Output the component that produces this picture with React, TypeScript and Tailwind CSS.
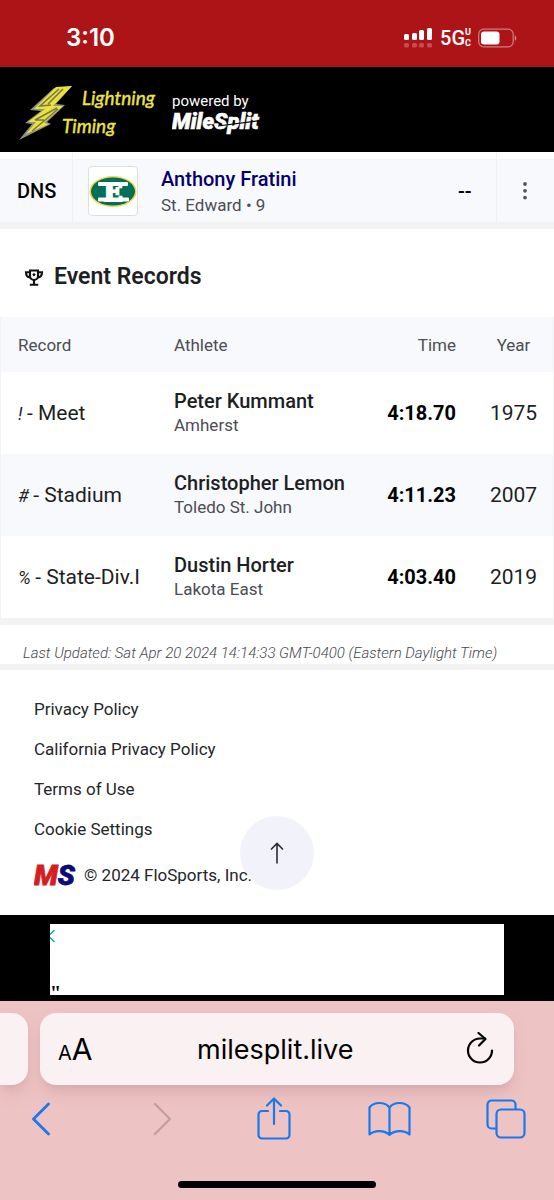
type RecordRow = {
  mark: string;
  label: string;
  athlete: string;
  school: string;
  time: string;
  year: string;
};

const records: RecordRow[] = [
  { mark: "!", label: "- Meet", athlete: "Peter Kummant", school: "Amherst", time: "4:18.70", year: "1975" },
  { mark: "#", label: "- Stadium", athlete: "Christopher Lemon", school: "Toledo St. John", time: "4:11.23", year: "2007" },
  { mark: "%", label: "- State-Div.I", athlete: "Dustin Horter", school: "Lakota East", time: "4:03.40", year: "2019" },
];

const footerLinks = ["Privacy Policy", "California Privacy Policy", "Terms of Use", "Cookie Settings"];

function StatusBar() {
  return (
    <div className="flex items-center justify-between bg-[#ad1417] pl-[66px] pr-[37px] pt-2 h-[67px] text-white font-['Inter',sans-serif]">
      <span className="text-2xl font-semibold">3:10</span>
      <div className="flex items-center gap-[7px]">
        {/* Dual SIM signal */}
        <svg width="29" height="20" viewBox="0 0 29 20" fill="currentColor">
          <rect x="0" y="6" width="5" height="6" rx="1.5" />
          <rect x="8" y="5" width="5" height="7" rx="1.5" />
          <rect x="15" y="2" width="5" height="10" rx="1.5" />
          <rect x="23" y="0" width="5" height="12" rx="1.5" />
          <g opacity="0.25">
            <rect x="0" y="15" width="5" height="4.5" rx="1.5" />
            <rect x="8" y="15" width="5" height="4.5" rx="1.5" />
            <rect x="15" y="15" width="5" height="4.5" rx="1.5" />
            <rect x="23" y="15" width="5" height="4.5" rx="1.5" />
          </g>
        </svg>
        <div className="flex items-center font-['Roboto',sans-serif]">
          <span className="text-xl leading-5 font-medium">5G</span>
          <span className="flex flex-col text-[9px] leading-[11px] font-bold">
            <span>U</span>
            <span>C</span>
          </span>
        </div>
        <svg width="39" height="20" viewBox="0 0 39 20">
          <rect x="0.7" y="1.2" width="34.5" height="17.6" rx="5" fill="none" stroke="#fff" strokeOpacity="0.45" strokeWidth="1.2" />
          <rect x="3" y="3.5" width="18.5" height="13" rx="3" fill="#fff" />
          <path d="M36.8 7.2c2 .9 2 4.700 0 5.600z" fill="#fff" fillOpacity="0.5" />
        </svg>
      </div>
    </div>
  );
}

function Header() {
  return (
    <header className="flex items-center gap-2 bg-black h-[85px] pl-[18px] text-white">
      <svg width="146" height="60" viewBox="0 0 146 60" role="img" aria-label="Lightning Timing">
        <path d="M36 8 54 6 38 24 47 25 29 42 33 44 1 60 14 44 7 43 23 31 12 30Z" fill="#8f9087" />
        <path d="M38 7 54 6 35 26 45 26 26 43 31 44 8 54 18 42 10 42 27 29 16 29Z" fill="#e9e23a" />
        <path d="M41 9 22 26 33 25M45 9 30 24M39 28 17 40 26 40M40 29 26 41 14 51" fill="none" stroke="#77794f" strokeWidth="1.6" />
        <g fill="#eee545" stroke="#eee545" strokeWidth="0.4" fontFamily="Lato, sans-serif" fontStyle="italic" fontSize="19">
          <text x="64" y="25">Lightning</text>
          <text x="44" y="53">Timing</text>
        </g>
      </svg>
      <div className="flex flex-col pt-2 font-['Roboto',sans-serif]">
        <span className="text-[15px] leading-4">powered by</span>
        <svg width="94" height="26" viewBox="0 0 94 26" role="img" aria-label="MileSplit">
          <text x="0" y="20" fill="#fff" stroke="#fff" strokeWidth="0.6" fontFamily="Roboto, sans-serif" fontStyle="italic" fontWeight="900" fontSize="22">
            MileSplit
          </text>
          <path d="M46 17 92 11" stroke="#000" strokeWidth="1.2" />
        </svg>
      </div>
    </header>
  );
}

function SchoolLogo() {
  return (
    <svg width="48" height="48" viewBox="0 0 48 48" role="img" aria-label="St. Edward">
      <ellipse cx="24" cy="24.500" rx="23.500" ry="15.500" fill="#f3d648" />
      <ellipse cx="24" cy="24.500" rx="22" ry="14" fill="#00705a" />
      <text x="24" y="33.500" textAnchor="middle" fill="#fff" stroke="#fff" strokeWidth="2" fontFamily="DejaVu Serif, serif" fontWeight="700" fontSize="25">
        E
      </text>
      <rect x="9" y="15" width="30" height="4" rx="1" fill="#fff" />
      <rect x="9" y="30.500" width="31" height="4" rx="1" fill="#fff" />
    </svg>
  );
}

function ResultsTable() {
  return (
    <table className="w-full border-b-[7px] border-[#f3f3f4]">
      <tbody>
        {/* Tail of the row above, cut by the header */}
        <tr className="h-[7px] border-b border-[#f3f3f6]">
          <td className="border-r border-[#f3f3f6]" />
          <td />
          <td />
          <td />
          <td className="border-l border-[#f3f3f6]" />
        </tr>
        <tr className="bg-[#f8f9fd]">
          <td className="w-[72px] border-r border-[#f0f1f5] pl-[17px] text-xl font-medium text-black">DNS</td>
          <td className="w-[77px] py-[6px] pl-[15px]">
            <div className="flex items-center justify-center size-[50px] rounded border border-[#dedfe3] bg-white">
              <SchoolLogo />
            </div>
          </td>
          <td className="pl-3 pt-1">
            <a href="#athlete" className="block text-xl leading-6 font-medium text-[#05006e]">
              Anthony Fratini
            </a>
            <span className="block text-[17px] leading-7 text-[#4b4d54]">St. Edward • 9</span>
          </td>
          <td className="pr-6 text-right text-xl font-medium">--</td>
          <td className="w-[58px] border-l border-[#f0f1f5]">
            <button aria-label="More" className="flex items-center justify-center w-full h-10">
              <svg width="6" height="20" viewBox="0 0 6 20" fill="#55565c">
                <circle cx="3" cy="3" r="1.900" />
                <circle cx="3" cy="9.800" r="1.900" />
                <circle cx="3" cy="16.600" r="1.900" />
              </svg>
            </button>
          </td>
        </tr>
      </tbody>
    </table>
  );
}

function EventRecords() {
  return (
    <section>
      <h2 className="flex items-center gap-[10px] h-[88px] pt-[10px] pl-6 text-[23px] font-semibold text-[#1d1f24]">
        <svg width="20" height="20" viewBox="0 0 20 20" fill="none" stroke="#111" strokeWidth="2.100">
          <path d="M6 2.500h8v5.500a4 4 0 0 1-8 0z" />
          <path d="M6 4.200H2c0 3.400 1.400 5 4.200 5.200M14 4.200h4c0 3.400-1.400 5-4.200 5.200M10 12v4M5.800 16.800h8.400" />
          <path d="m10 4.400.6 1.300 1.400.2-1 1 .2 1.400-1.200-.6-1.200.6.2-1.400-1-1 1.400-.2z" fill="#111" stroke="none" />
        </svg>
        Event Records
      </h2>
      <div className="border-x border-[#f3f3f4] border-b-[7px]">
        <table className="w-full">
          <thead>
            <tr className="h-[55px] bg-[#f8f9fd] text-[17px] text-[#4b4d54]">
              <th className="w-[156px] pt-1 pl-[17px] text-left font-normal">Record</th>
              <th className="pt-1 pl-[17px] text-left font-normal">Athlete</th>
              <th className="pt-1 pr-[18px] text-right font-normal">Time</th>
              <th className="w-[79px] pt-1 text-center font-normal">Year</th>
            </tr>
          </thead>
          <tbody>
            {records.map((r) => (
              <tr key={r.mark} className="h-[82px] even:bg-[#f8f9fd] text-xl text-[#1d1f24]">
                <td className="pt-[3px] pl-[17px] text-[21px] whitespace-nowrap">
                  <i className="text-lg">{r.mark} </i>
                  {r.label}
                </td>
                <td className="pl-[17px]">
                  <div className="leading-6 font-medium">{r.athlete}</div>
                  <div className="text-[17px] leading-6 text-[#4b4d54]">{r.school}</div>
                </td>
                <td className="pr-[18px] text-right font-bold text-black">{r.time}</td>
                <td className="pt-[3px] text-center text-[21px]">{r.year}</td>
              </tr>
            ))}
          </tbody>
        </table>
      </div>
      <p className="pt-[17px] pl-[23px] text-[15px] leading-[22px] font-light italic text-[#45474e] border-b-[6px] border-[#f3f3f4]">
        Last Updated: Sat Apr 20 2024 14:14:33 GMT-0400 (Eastern Daylight Time)
      </p>
    </section>
  );
}

function Footer() {
  return (
    <footer className="relative px-[34px] pt-[19px] pb-[22px] text-[17px] text-[#24262b]">
      <ul>
        {footerLinks.map((link) => (
          <li key={link} className="h-10 leading-10">
            <a href="#footer">{link}</a>
          </li>
        ))}
      </ul>
      <div className="relative z-10 flex items-center gap-2 pt-[10px] pointer-events-none">
        <svg width="42" height="34" viewBox="0 0 42 34" role="img" aria-label="MS">
          <text x="0" y="26" strokeWidth="0.8" fontFamily="Roboto, sans-serif" fontStyle="italic" fontWeight="900" fontSize="28">
            <tspan fill="#d3201f" stroke="#d3201f">M</tspan>
            <tspan fill="#0a0a78" stroke="#0a0a78">S</tspan>
          </text>
        </svg>
        <span>© 2024 FloSports, Inc.</span>
      </div>
      <button
        aria-label="Back to top"
        className="absolute left-1/2 bottom-[25px] -translate-x-1/2 flex items-center justify-center size-[74px] rounded-full bg-[#f2f3fa]"
      >
        <svg width="14" height="22" viewBox="0 0 14 22" fill="none" stroke="#2b2c31" strokeWidth="1.600">
          <path d="M7 21.500V1.500M1 7.500l6-6 6 6" />
        </svg>
      </button>
    </footer>
  );
}

function AdBanner() {
  return (
    <div className="bg-black px-[50px] pt-[9px] pb-[6px]">
      <div className="flex flex-col justify-between h-[71px] bg-white">
        <svg width="5" height="14" viewBox="0 0 5 14" className="mt-[5px]" fill="none" stroke="#159fc0" strokeWidth="1.500">
          <path d="M4.500 1 0 5.500M0 8.500 4.500 13" />
        </svg>
        <span className="h-3 leading-5 text-xl font-bold text-black font-['Liberation_Serif',serif]">"</span>
      </div>
    </div>
  );
}

function BrowserBar() {
  return (
    <div className="bg-[#eec3c4] pt-3 pb-3 font-['Inter',sans-serif]">
      <div className="flex gap-3">
        <div className="w-7 rounded-r-2xl bg-[#faf1f2] shadow-lg shadow-[#c99a9c]/50" />
        <div className="flex flex-1 items-center justify-between h-[72px] mr-10 pl-[18px] pr-5 rounded-2xl bg-[#faf1f2] text-black shadow-lg shadow-[#c99a9c]/50">
          <button aria-label="Page settings" className="flex items-baseline">
            <span className="text-xl">A</span>
            <span className="text-3xl">A</span>
          </button>
          <span className="pt-1 pr-2 text-[27px]">milesplit.live</span>
          <button aria-label="Reload">
            <svg width="28" height="34" viewBox="0 0 28 34" fill="none" stroke="#000" strokeWidth="2.200" strokeLinecap="round" strokeLinejoin="round">
              <path d="M26 18.500a12 12 0 1 1-12-12h5" />
              <path d="M12.500 1 19.500 7 13 13.500" />
            </svg>
          </button>
        </div>
      </div>
      <nav className="flex items-center justify-between h-[68px] pl-[21px] pr-7 text-[#1679ee]">
        <button aria-label="Back" className="flex justify-center w-10">
          <svg width="18" height="34" viewBox="0 0 18 34" fill="none" stroke="currentColor" strokeWidth="2.800" strokeLinecap="round" strokeLinejoin="round">
            <path d="M16.500 2 1.500 17l15 15" />
          </svg>
        </button>
        <button aria-label="Forward" className="flex justify-end w-10 text-[#c29fa2]">
          <svg width="28" height="34" viewBox="0 0 28 34" fill="none" stroke="currentColor" strokeWidth="2.400" strokeLinecap="round" strokeLinejoin="round">
            <path d="M6 2l15 15L6 32" />
          </svg>
        </button>
        <button aria-label="Share" className="flex justify-center w-10">
          <svg width="34" height="44" viewBox="0 0 34 44" fill="none" stroke="currentColor" strokeWidth="2.200" strokeLinecap="round" strokeLinejoin="round">
            <path d="M11 14H5a3.500 3.500 0 0 0-3.500 3.500V38A3.500 3.500 0 0 0 5 41.500h24a3.500 3.500 0 0 0 3.500-3.500V17.500A3.500 3.500 0 0 0 29 14h-6" />
            <path d="M17 27V2M10 8.500 17 1.500l7 7" />
          </svg>
        </button>
        <button aria-label="Bookmarks" className="flex justify-center w-10">
          <svg width="43" height="36" viewBox="0 0 43 36" className="shrink-0" fill="none" stroke="currentColor" strokeWidth="2.200" strokeLinecap="round" strokeLinejoin="round">
            <path d="M21.500 6.500C17 .5 6 .5 1.500 6.500v27c5-4.500 15-4.500 20 .5 5-5 15-5 20-.5v-27C37 .5 26 .5 21.500 6.500zV34" />
          </svg>
        </button>
        <button aria-label="Tabs" className="flex justify-center w-10">
          <svg width="40" height="40" viewBox="0 0 40 40" fill="none" stroke="currentColor" strokeWidth="2.200" strokeLinecap="round" strokeLinejoin="round">
            <rect x="10.500" y="10.500" width="28" height="28" rx="4.500" />
            <path d="M29.500 10V5.500a4 4 0 0 0-4-4h-20a4 4 0 0 0-4 4v20a4 4 0 0 0 4 4h4.500" />
          </svg>
        </button>
      </nav>
      <div className="mt-7 mx-auto w-[198px] h-[7px] rounded-full bg-black" />
    </div>
  );
}

export default function App() {
  return (
    <div className="bg-white font-['Roboto',sans-serif]">
      <StatusBar />
      <Header />
      <ResultsTable />
      <EventRecords />
      <Footer />
      <AdBanner />
      <BrowserBar />
    </div>
  );
}
